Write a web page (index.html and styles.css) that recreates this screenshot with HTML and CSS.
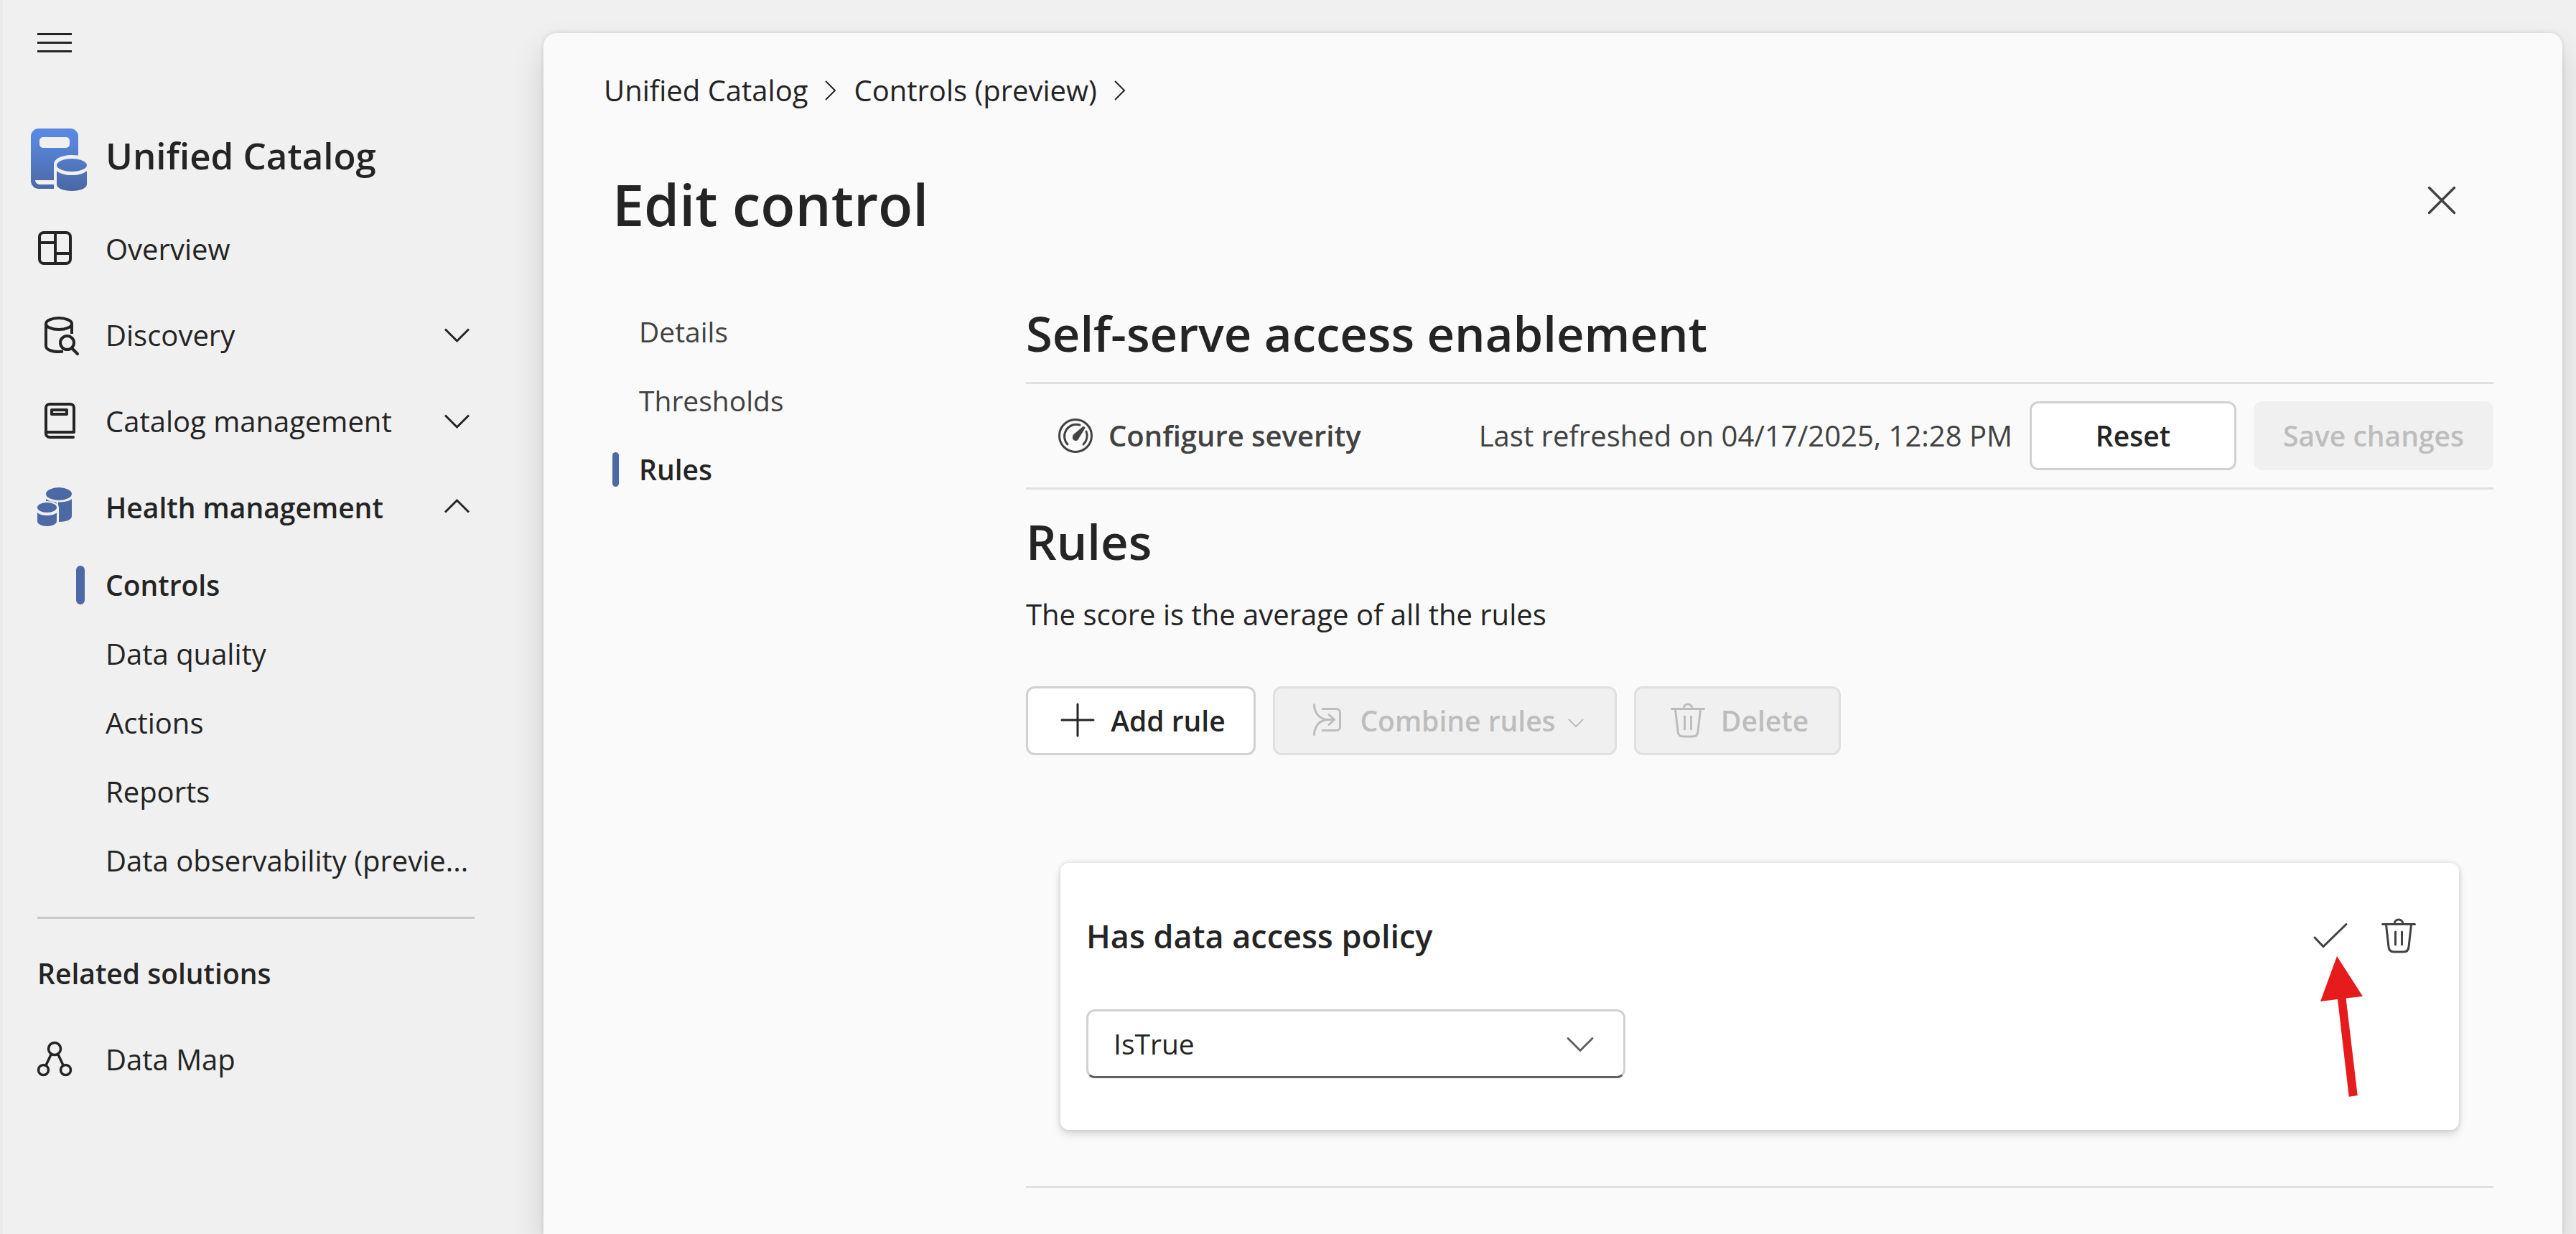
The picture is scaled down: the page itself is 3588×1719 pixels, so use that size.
FILE: index.html
```html
<!DOCTYPE html>
<html lang="en">
<head>
<meta charset="utf-8">
<meta name="viewport" content="width=device-width, initial-scale=1">
<title>Edit control - Unified Catalog</title>
<link rel="stylesheet" href="styles.css">
</head>
<body>
<div class="app">
  <aside class="sidebar">
    <button class="icon-button menu-button" type="button" aria-label="Toggle navigation">
      <svg class="icon-md" viewBox="0 0 60 60" aria-hidden="true"><path d="M6 17.500h48M6 29.500h48M6 41.500h48" stroke-width="3"/></svg>
    </button>
    <div class="brand">
      <svg class="brand-logo" viewBox="0 0 72 108" aria-hidden="true">
        <defs>
          <linearGradient id="logo-fill" gradientUnits="userSpaceOnUse" x1="0" y1="17" x2="0" y2="104">
            <stop offset="0" stop-color="#5b8ae2"/><stop offset=".25" stop-color="#5784d8"/><stop offset="1" stop-color="#4a67a3"/>
          </linearGradient>
        </defs>
        <path class="logo-shape" fill-rule="evenodd" d="M6 17h44a11 11 0 0 1 11 11v73H6a11 11 0 0 1-11-11V28A11 11 0 0 1 6 17zM12 29a5 5 0 0 0-5 5v5a5 5 0 0 0 5 5h32a5 5 0 0 0 5-5v-5a5 5 0 0 0-5-5zM1 89a6 6 0 0 0 6 6h50v-6z"/>
        <path class="logo-gap" d="M27 67c0-8 11-13 25-13 12 0 21 3 25 8v46H31c-3-3-4-5-4-9z"/>
        <ellipse class="logo-shape" cx="52" cy="68" rx="21" ry="9"/>
        <path class="logo-shape" d="M31 76c5 4 12 6 21 6s16-2 21-6v19c0 5-9 9-21 9s-21-4-21-9z"/>
      </svg>
      <span class="brand-name">Unified Catalog</span>
    </div>
    <nav aria-label="Unified Catalog">
      <a class="nav-item" href="#overview">
        <svg class="icon-lg" viewBox="0 0 72 72" aria-hidden="true"><path d="M13 13h31a6 6 0 0 1 6 6v31a6 6 0 0 1-6 6H13a6 6 0 0 1-6-6V19a6 6 0 0 1 6-6zM29 13v43M7 27h22M29 42h21" stroke-width="4"/></svg>
        <span>Overview</span>
      </a>
      <a class="nav-item" href="#discovery">
        <svg class="icon-lg" viewBox="0 0 72 72" aria-hidden="true"><g stroke-width="4"><ellipse cx="34" cy="20" rx="18" ry="8"/><path d="M16 20v31c0 5 8 8 18 8l6-.500M52 20v14"/><circle cx="45.500" cy="46.500" r="9.500"/><path d="M52 54l8 8" stroke-linecap="round"/></g></svg>
        <span>Discovery</span>
        <svg class="nav-chevron" viewBox="0 0 48 48" aria-hidden="true"><path d="M7 15.500l16.500 16.500L40 15.500" stroke-width="3"/></svg>
      </a>
      <a class="nav-item" href="#catalog-management">
        <svg class="icon-lg" viewBox="0 0 72 72" aria-hidden="true"><g stroke-width="4"><path d="M54 58H21a5 5 0 0 1-5-5V17a5 5 0 0 1 5-5h29a5 5 0 0 1 5 5v34H16" stroke-linecap="round" stroke-linejoin="round"/><path d="M24 20h21v6H24z" stroke-linejoin="round"/></g></svg>
        <span>Catalog management</span>
        <svg class="nav-chevron" viewBox="0 0 48 48" aria-hidden="true"><path d="M7 15.500l16.500 16.500L40 15.500" stroke-width="3"/></svg>
      </a>
      <a class="nav-item nav-item-active" href="#health-management">
        <svg class="icon-lg icon-solid" viewBox="0 0 72 72" aria-hidden="true"><ellipse cx="34" cy="17" rx="18" ry="9"/><path d="M16 24c4 3 9 4 14 4.500L33 33v-4.500c8 0 15-1 19-4.500v24c0 5-8 8-18 8V36c0-6-9-9-18-9z"/><ellipse cx="17.500" cy="36" rx="13.500" ry="7"/><path d="M4 43c3 3 8 4 13.500 4S28 46 31 43v12c0 4-6 7-13.500 7S4 59 4 55z"/></svg>
        <span>Health management</span>
        <svg class="nav-chevron" viewBox="0 0 48 48" aria-hidden="true"><path d="M7 30.500L23.500 14 40 30.500" stroke-width="3"/></svg>
      </a>
      <ul class="sub-nav">
        <li><a class="sub-item sub-item-active" href="#controls" aria-current="page"><span>Controls</span></a></li>
        <li><a class="sub-item" href="#data-quality"><span>Data quality</span></a></li>
        <li><a class="sub-item" href="#actions"><span>Actions</span></a></li>
        <li><a class="sub-item" href="#reports"><span>Reports</span></a></li>
        <li><a class="sub-item" href="#data-observability"><span>Data observability (previe...</span></a></li>
      </ul>
      <hr class="nav-divider">
      <h2 class="nav-heading">Related solutions</h2>
      <a class="nav-item" href="#data-map">
        <svg class="icon-lg" viewBox="0 0 72 72" aria-hidden="true"><g stroke-width="3.500"><circle cx="28" cy="21" r="8.500"/><circle cx="12.500" cy="50.500" r="7"/><circle cx="43.500" cy="50.500" r="7"/><path d="M23 29l-7 15M33 29l7 15"/></g></svg>
        <span>Data Map</span>
      </a>
    </nav>
  </aside>

  <main class="panel">
    <nav class="breadcrumb" aria-label="Breadcrumb">
      <a href="#unified-catalog">Unified Catalog</a>
      <svg class="icon-sm" viewBox="0 0 24 36" aria-hidden="true"><path d="M5 5l13 13L5 31" stroke-width="2"/></svg>
      <a href="#controls">Controls (preview)</a>
      <svg class="icon-sm" viewBox="0 0 24 36" aria-hidden="true"><path d="M5 5l13 13L5 31" stroke-width="2"/></svg>
    </nav>

    <header class="page-header">
      <h1>Edit control</h1>
      <button class="icon-button" type="button" aria-label="Close">
        <svg class="icon-md" viewBox="0 0 60 60" aria-hidden="true"><path d="M12.500 12.500l35 35M47.500 12.500l-35 35" stroke-width="3.500" stroke-linecap="round"/></svg>
      </button>
    </header>

    <div class="page-body">
      <nav aria-label="Control settings">
        <ul class="tabs">
          <li><a class="tab" href="#details">Details</a></li>
          <li><a class="tab" href="#thresholds">Thresholds</a></li>
          <li><a class="tab tab-active" href="#rules" aria-current="page">Rules</a></li>
        </ul>
      </nav>

      <section class="content">
        <h2 class="section-title">Self-serve access enablement</h2>
        <div class="toolbar">
          <button class="text-button" type="button">
            <svg class="icon-md" viewBox="0 0 60 60" aria-hidden="true"><g stroke-width="3" stroke-linecap="round"><circle cx="30" cy="30" r="22.500"/><path d="M19 42a16.500 16.500 0 0 1 17-27M45 24a16.500 16.500 0 0 1-4 18"/></g><path class="icon-fill" d="M42.500 17.500c1 .5 1 1.500.5 2.500l-8 13c-1 3-3 4.500-5 4-3-.5-4.500-3-4-6 .3-1.500 1-2.500 2-3.500l12-10c1-.8 2-.5 2.500 0z"/></svg>
            <span>Configure severity</span>
          </button>
          <span class="refreshed">Last refreshed on 04/17/2025, 12:28 PM</span>
          <button class="button" type="button">Reset</button>
          <button class="button button-primary" type="button" disabled>Save changes</button>
        </div>

        <h2 class="section-title rules-title">Rules</h2>
        <p class="rules-note">The score is the average of all the rules</p>

        <div class="actions">
          <button class="button button-add" type="button">
            <svg class="icon-md" viewBox="0 0 60 60" aria-hidden="true"><path d="M30 7v44M8 29h44" stroke-width="3" stroke-linecap="round"/></svg>
            <span>Add rule</span>
          </button>
          <button class="button button-menu" type="button" disabled>
            <svg class="icon-md" viewBox="0 0 60 60" aria-hidden="true"><path d="M12.500 7.500c0 12 8 21 20 21h8M12.500 49.500c0-12 8-21 20-21M33 21.500l7.500 7-7.500 7M24 13.500h19.500a5 5 0 0 1 5 5v20a5 5 0 0 1-5 5H24" stroke-width="3" stroke-linecap="round" stroke-linejoin="round"/></svg>
            <span>Combine rules</span>
            <svg class="icon-sm" viewBox="0 0 24 36" aria-hidden="true"><path d="M2 16l10 10 10-10" stroke-width="2"/></svg>
          </button>
          <button class="button" type="button" disabled>
            <svg class="icon-md" viewBox="0 0 60 60" aria-hidden="true"><path d="M7.500 13.500h45M24 13a6 6 0 0 1 12 0M12.500 14l3.500 31c.5 4.500 3 7 7 7h14c4 0 6.500-2.500 7-7l3.500-31M25.500 24v18M34.500 24v18" stroke-width="3" stroke-linecap="round"/></svg>
            <span>Delete</span>
          </button>
        </div>

        <article class="rule-card">
          <header class="rule-header">
            <h3 id="rule-name">Has data access policy</h3>
            <button class="icon-button" type="button" aria-label="Apply">
              <svg class="icon-md" viewBox="0 0 60 60" aria-hidden="true"><path d="M9 32l12 12.500L53 13.500" stroke-width="3" stroke-linecap="round"/></svg>
            </button>
            <button class="icon-button" type="button" aria-label="Delete rule">
              <svg class="icon-md" viewBox="0 0 60 60" aria-hidden="true"><path d="M7.500 13.500h45M24 13a6 6 0 0 1 12 0M12.500 14l3.500 31c.5 4.500 3 7 7 7h14c4 0 6.500-2.500 7-7l3.500-31M25.500 24v18M34.500 24v18" stroke-width="3" stroke-linecap="round"/></svg>
            </button>
          </header>
          <div class="select-field">
            <select aria-labelledby="rule-name">
              <option selected>IsTrue</option>
              <option>IsFalse</option>
            </select>
            <svg class="icon-md" viewBox="0 0 60 60" aria-hidden="true"><path d="M13 22.500l17 17 17-17" stroke-width="3" stroke-linecap="round"/></svg>
          </div>
          <svg class="pointer-arrow" viewBox="0 0 63 200" aria-hidden="true"><path d="M25 2L61 58 37.600 60.600 53.700 196 41.700 197.700 26 62 2 65z"/></svg>
        </article>
        <hr class="content-divider">
      </section>
    </div>
  </main>
</div>
</body>
</html>
```
FILE: styles.css
```css
:root {
  --ink: #242424;
  --ink-soft: #424242;
  --brand: #4c69a6;
  --line: #e0e0e0;
  --border: #d1d1d1;
  --disabled: #bdbdbd;
  --surface: #fafafa;
  --canvas: #f0f0f0;
}

* {
  box-sizing: border-box;
}

body {
  margin: 0;
  background: var(--canvas);
  color: var(--ink);
  font: 400 40px/60px "Open Sans", "Noto Sans", sans-serif;
}

h1, h2, h3, p, ul {
  margin: 0;
  padding: 0;
  font-weight: 600;
}

ul {
  list-style: none;
}

a {
  color: inherit;
  text-decoration: none;
}

button, select {
  font: inherit;
  color: inherit;
}

button {
  display: flex;
  align-items: center;
  justify-content: center;
  gap: 16px;
  margin: 0;
  padding: 0;
  border: 0;
  background: none;
  cursor: pointer;
}

hr {
  height: 3px;
  margin: 0;
  border: 0;
}

svg {
  flex: none;
  overflow: visible;
  fill: none;
  stroke: currentColor;
}

.icon-sm { width: 24px; height: 36px; }
.icon-md { width: 60px; height: 60px; }
.icon-lg { width: 72px; height: 72px; }

.icon-fill {
  fill: currentColor;
  stroke: none;
}

.icon-button {
  width: 96px;
  height: 96px;
  flex: none;
  color: var(--ink-soft);
}

.app {
  display: flex;
  min-height: 100vh;
  overflow: hidden;
  border-left: 4px solid #ebebeb;
}

/* Sidebar */

.sidebar {
  flex: 0 0 753px;
  min-width: 0;
  padding: 12px 96px 48px 44px;
}

.menu-button {
  margin-left: -20px;
  color: var(--ink);
}

.brand {
  display: flex;
  align-items: center;
  gap: 27px;
  height: 108px;
  margin: 54px 0 17px;
}

.brand-logo {
  width: 72px;
  height: 108px;
  stroke: none;
}

.logo-shape { fill: url(#logo-fill); }
.logo-gap { fill: var(--canvas); }

.brand-name {
  font-size: 51px;
  font-weight: 600;
}

.nav-item {
  display: flex;
  align-items: center;
  gap: 27px;
  height: 120px;
}

.nav-item-active {
  font-size: 39px;
  font-weight: 600;
}

.icon-solid {
  fill: var(--brand);
  stroke: none;
}

.nav-chevron {
  width: 48px;
  height: 48px;
  margin-left: auto;
}

.sub-item {
  display: flex;
  align-items: center;
  height: 96px;
  padding-left: 99px;
  font-weight: 400;
  white-space: nowrap;
}

.sub-item-active {
  gap: 29px;
  padding-left: 58px;
  font-size: 39px;
  font-weight: 600;
}

.sub-item-active::before {
  width: 12px;
  height: 54px;
  border-radius: 6px;
  background: var(--brand);
  content: "";
}

.nav-divider {
  margin: 30px 0 46px 4px;
  background: #c8c8c8;
}

.nav-heading {
  margin: 0 0 30px 4px;
  font-size: 39px;
}

/* Main panel */

.panel {
  flex: 1;
  min-width: 0;
  margin: 46px 19px 0 0;
  padding: 50px 96px 48px 84px;
  border-radius: 18px 18px 0 0;
  background: var(--surface);
  box-shadow: 0 0 6px rgba(0, 0, 0, .12), 0 24px 48px rgba(0, 0, 0, .14);
}

.breadcrumb {
  display: flex;
  align-items: center;
  gap: 20px;
}

.page-header {
  display: flex;
  align-items: flex-start;
  justify-content: space-between;
  margin-top: 75px;
  padding: 0 24px 0 12px;
}

h1 {
  font-size: 79px;
  line-height: 108px;
}

.page-body {
  display: grid;
  grid-template-columns: 576px minmax(0, 1fr);
  margin-top: 75px;
  padding-left: 12px;
}

.tab {
  display: flex;
  align-items: center;
  gap: 28px;
  height: 96px;
  color: var(--ink-soft);
  font-size: 39px;
  font-weight: 400;
}

.tab::before {
  width: 9px;
  height: 48px;
  border-radius: 5px;
  content: "";
}

.tab-active {
  color: var(--ink);
  font-weight: 600;
}

.tab-active::before {
  background: var(--brand);
}

.section-title {
  font-size: 67px;
  line-height: 100px;
}

.toolbar {
  display: flex;
  align-items: center;
  gap: 24px;
  margin-top: 18px;
  padding: 24px 0;
  border-top: 3px solid var(--line);
  border-bottom: 3px solid var(--line);
}

.text-button {
  padding-left: 39px;
  color: var(--ink-soft);
  font-weight: 600;
}

.refreshed {
  margin-left: auto;
  color: var(--ink-soft);
}

.button {
  min-width: 288px;
  height: 96px;
  padding: 0 36px;
  border: 3px solid var(--border);
  border-radius: 12px;
  background: #fff;
  font-size: 39px;
  font-weight: 600;
}

.button:disabled {
  border-color: var(--line);
  background: var(--canvas);
  color: var(--disabled);
  cursor: default;
}

.button-primary {
  min-width: 334px;
}

.button-primary:disabled {
  border-color: var(--canvas);
}

.button-add {
  min-width: 320px;
}

.button-menu {
  min-width: 479px;
}

.rules-title {
  margin-top: 22px;
}

.rules-note {
  margin-top: 22px;
  font-weight: 400;
}

.actions {
  display: flex;
  gap: 24px;
  margin-top: 70px;
}

/* Rule card */

.rule-card {
  position: relative;
  margin: 150px 48px 78px;
  padding: 54px 36px 72px;
  border-radius: 12px;
  background: #fff;
  box-shadow: 0 0 6px rgba(0, 0, 0, .12), 0 6px 12px rgba(0, 0, 0, .14);
}

.rule-header {
  display: flex;
  align-items: center;
}

.rule-header h3 {
  flex: 1;
  font-size: 45px;
}

.select-field {
  position: relative;
  width: 751px;
  max-width: 100%;
  margin-top: 54px;
}

.select-field select {
  display: block;
  width: 100%;
  height: 96px;
  padding: 0 96px 0 35px;
  border: 3px solid var(--border);
  border-bottom-color: #616161;
  border-radius: 12px;
  background: #fff;
  font-size: 39px;
  appearance: none;
}

.select-field svg {
  position: absolute;
  top: 18px;
  right: 33px;
  color: #616161;
  pointer-events: none;
}

.pointer-arrow {
  position: absolute;
  top: 128px;
  right: 132px;
  width: 63px;
  height: 200px;
  fill: #e61b1b;
  stroke: none;
  pointer-events: none;
}

.content-divider {
  background: var(--line);
}
```
